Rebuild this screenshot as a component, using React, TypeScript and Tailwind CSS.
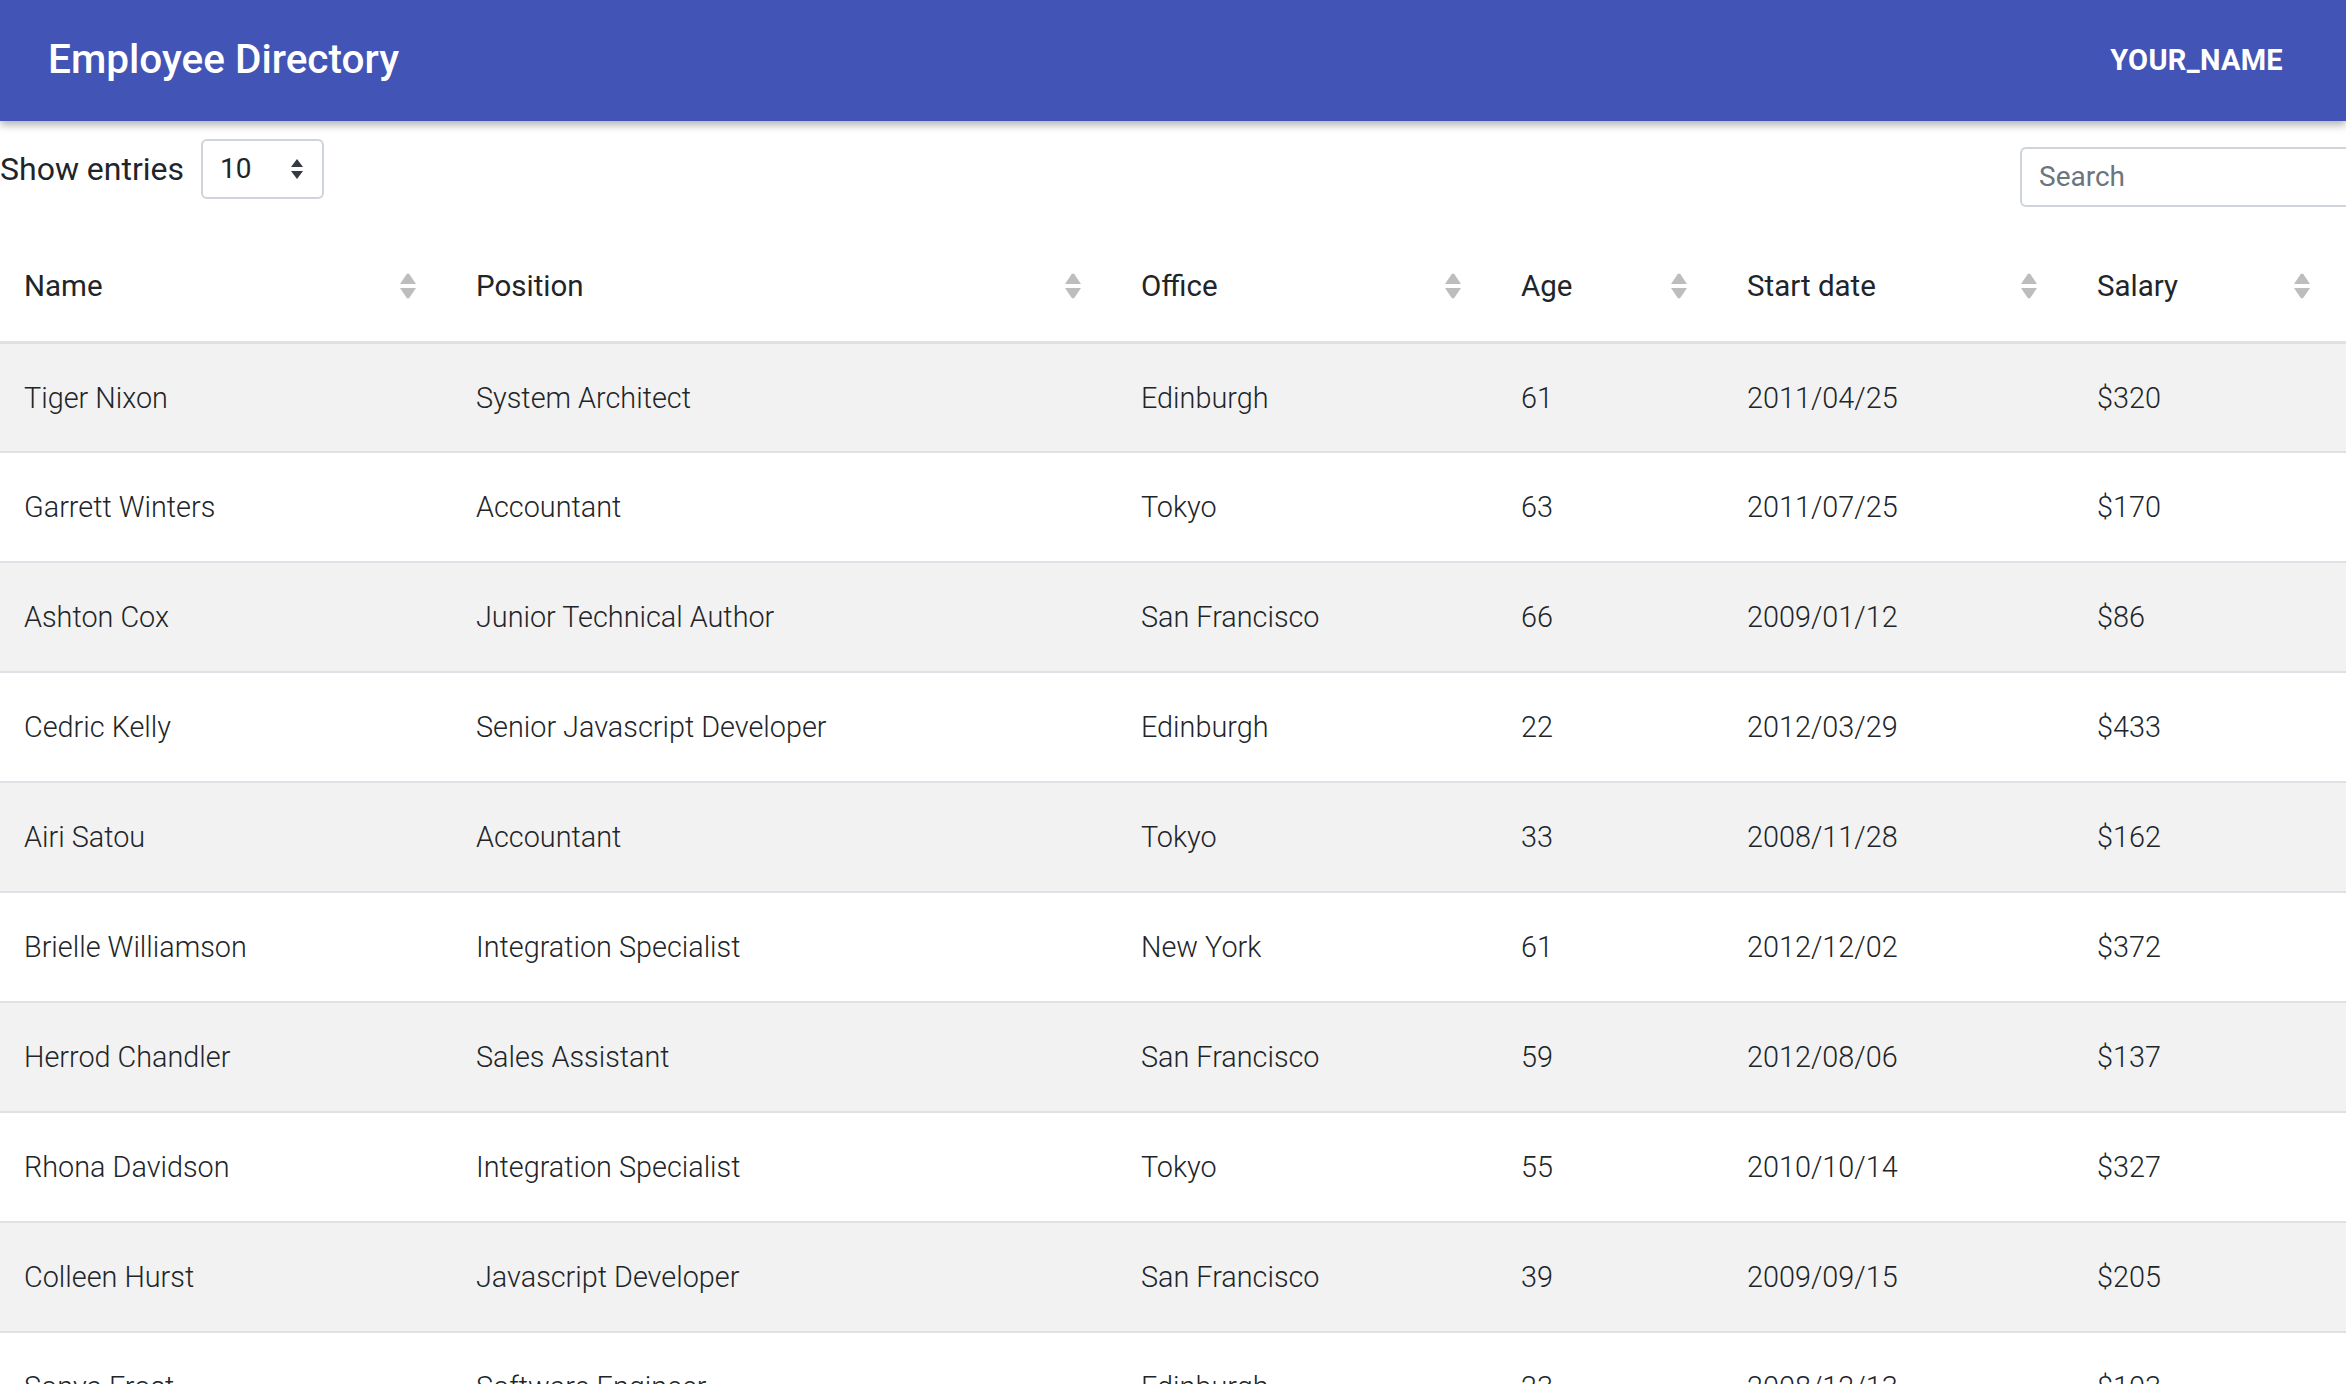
const employees = [
  ["Tiger Nixon", "System Architect", "Edinburgh", "61", "2011/04/25", "$320"],
  ["Garrett Winters", "Accountant", "Tokyo", "63", "2011/07/25", "$170"],
  ["Ashton Cox", "Junior Technical Author", "San Francisco", "66", "2009/01/12", "$86"],
  ["Cedric Kelly", "Senior Javascript Developer", "Edinburgh", "22", "2012/03/29", "$433"],
  ["Airi Satou", "Accountant", "Tokyo", "33", "2008/11/28", "$162"],
  ["Brielle Williamson", "Integration Specialist", "New York", "61", "2012/12/02", "$372"],
  ["Herrod Chandler", "Sales Assistant", "San Francisco", "59", "2012/08/06", "$137"],
  ["Rhona Davidson", "Integration Specialist", "Tokyo", "55", "2010/10/14", "$327"],
  ["Colleen Hurst", "Javascript Developer", "San Francisco", "39", "2009/09/15", "$205"],
  ["Sonya Frost", "Software Engineer", "Edinburgh", "23", "2008/12/13", "$103"],
];

const columns = [
  { label: "Name", w: "w-[452px]" },
  { label: "Position", w: "w-[665px]" },
  { label: "Office", w: "w-[380px]" },
  { label: "Age", w: "w-[226px]" },
  { label: "Start date", w: "w-[350px]" },
  { label: "Salary", w: "w-[273px]" },
];

function SortIcon() {
  return (
    <svg width="18" height="26" viewBox="0 0 18 26" className="shrink-0">
      <path d="M7.6 1.2 Q9 -0.2 10.4 1.2 L17 11 L1 11 Z" fill="#bdbdbd" />
      <path d="M7.6 24.8 Q9 26.2 10.4 24.8 L17 15 L1 15 Z" fill="#bdbdbd" />
    </svg>
  );
}

export default function App() {
  return (
    <div
      className="h-screen overflow-hidden bg-white text-[#212529]"
      style={{ fontFamily: "Roboto, 'Liberation Sans', sans-serif" }}
    >
      {/* app bar */}
      <header className="relative z-10 flex h-[121px] items-center justify-between bg-[#4254b5] pl-[48px] pr-[63px] shadow-[0_4px_8px_rgba(0,0,0,0.3)]">
        <h1 className="pb-[2px] text-[40.5px] font-medium text-white">Employee Directory</h1>
        <span className="text-[29px] font-bold tracking-[0.3px] text-white">YOUR_NAME</span>
      </header>

      {/* controls */}
      <div className="flex items-start">
        <div className="mt-[18px] flex items-center gap-[17px]">
          <span className="text-[32px]">Show entries</span>
          <div className="flex h-[60px] w-[123px] items-center justify-between rounded-[6px] border-2 border-[#ced4da] pl-[17px] pr-[18px]">
            <span className="text-[28px]">10</span>
            <svg width="14" height="22" viewBox="0 0 14 22">
              <path d="M7 1 L13 9 L1 9 Z" fill="#343a40" />
              <path d="M7 21 L13 13 L1 13 Z" fill="#343a40" />
            </svg>
          </div>
        </div>
        <div className="ml-auto mr-[-20px] mt-[26px] flex h-[60px] w-[346px] items-center rounded-[6px] border-2 border-[#ced4da] px-[17px]">
          <span className="text-[28px] text-[#6c757d]">Search</span>
        </div>
      </div>

      {/* table */}
      <table className="mt-[21px] w-full table-fixed border-collapse">
        <colgroup>
          {columns.map((c) => (
            <col key={c.label} className={c.w} />
          ))}
        </colgroup>
        <thead>
          <tr className="h-[114px] border-b-[3px] border-[#dee2e6]">
            {columns.map((c) => (
              <th key={c.label} className="px-[24px] pt-[4px] text-left align-middle text-[29.5px] font-normal">
                <div className="flex items-center justify-between pr-[11px]">
                  <span>{c.label}</span>
                  <SortIcon />
                </div>
              </th>
            ))}
          </tr>
        </thead>
        <tbody>
          {employees.map((row, i) => (
            <tr
              key={row[0]}
              className={`h-[110px] border-b-2 border-[#dee2e6] ${i % 2 === 0 ? "bg-[#f2f2f2]" : "bg-white"}`}
            >
              {row.map((cell, j) => (
                <td key={j} className="px-[24px] pt-[2px] align-middle text-[28.8px] font-light">
                  {cell}
                </td>
              ))}
            </tr>
          ))}
        </tbody>
      </table>
    </div>
  );
}
